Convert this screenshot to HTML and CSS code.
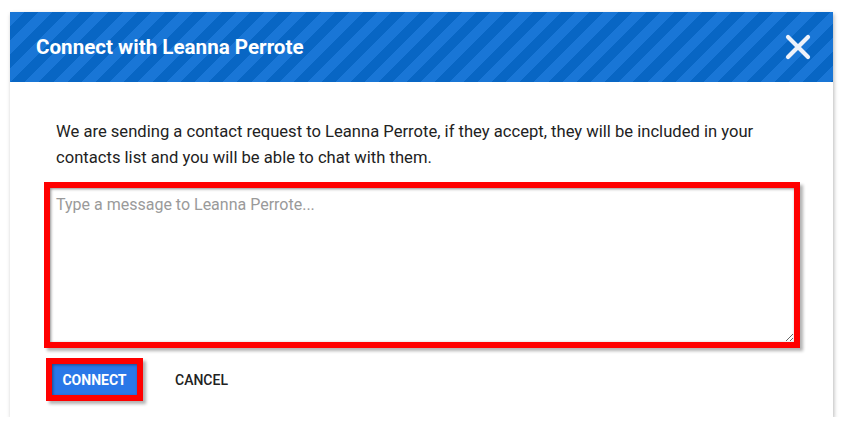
FILE: index.html
```html
<!DOCTYPE html>
<html>
<head>
<meta charset="utf-8">
<link rel="stylesheet" href="styles.css">
</head>
<body>
<div class="dialog">
  <div class="dialog-header">
    <h1 class="dialog-title">Connect with Leanna Perrote</h1>
    <button class="close-btn" aria-label="Close">
      <svg width="26" height="26" viewBox="0 0 26 26"><path d="M3 3 L23 23 M23 3 L3 23" stroke="#eef2fa" stroke-width="4.2" stroke-linecap="round" fill="none"/></svg>
    </button>
  </div>
  <div class="dialog-body">
    <p class="intro">We are sending a contact request to Leanna Perrote, if they accept, they will be included in your contacts list and you will be able to chat with them.</p>
    <textarea class="message" placeholder="Type a message to Leanna Perrote..."></textarea>
    <div class="actions">
      <button class="btn-connect">CONNECT</button>
      <button class="btn-cancel">CANCEL</button>
    </div>
  </div>
</div>
</body>
</html>
```
FILE: styles.css
```css
html, body {
  margin: 0;
  padding: 0;
  background: #fff;
}
body {
  padding: 12px 15px 0 10px;
  font-family: Roboto, "Liberation Sans", sans-serif;
}
.dialog {
  width: 823px;
  height: 405px;
  background: #fff;
  box-shadow: 1px 2px 4px rgba(0,0,0,0.28);
  display: flex;
  flex-direction: column;
}
.dialog-header {
  height: 70px;
  flex: none;
  display: flex;
  align-items: center;
  justify-content: space-between;
  padding: 0 22px 0 26px;
  background: repeating-linear-gradient(135deg, #1976d6 0 10px, #0866c4 10px 20px);
}
.dialog-title {
  margin: 0;
  color: #fff;
  font-size: 20.6px;
  font-weight: 700;
}
.close-btn {
  border: 0;
  padding: 0;
  background: none;
  width: 26px;
  height: 26px;
  display: block;
}
.close-btn svg { display: block; }
.dialog-body {
  padding: 37px 33px 0 34px;
  display: flex;
  flex-direction: column;
}
.intro {
  margin: 0 0 11px;
  padding: 0 12px;
  font-size: 16.6px;
  line-height: 26px;
  color: #222;
}
.message {
  box-sizing: border-box;
  width: 756px;
  height: 166px;
  border: 6px solid #ff0000;
  padding: 7px 6px;
  font-family: Roboto, "Liberation Sans", sans-serif;
  font-size: 16px;
  color: #333;
  box-shadow: inset 1px 1px 3px rgba(0,0,0,0.45), 3px 3px 3px rgba(0,0,0,0.3);
  outline: none;
  resize: both;
}
.message::placeholder { color: #9a9a9a; }
.actions {
  display: flex;
  align-items: center;
  margin-top: 10px;
  padding-left: 2px;
}
.btn-connect {
  box-sizing: border-box;
  width: 97px;
  height: 43px;
  border: 6px solid #ff0000;
  background: #2a78e8;
  color: #fff;
  font-family: Roboto, "Liberation Sans", sans-serif;
  font-weight: 700;
  font-size: 14px;
  padding: 0;
  box-shadow: inset 1px 1px 3px rgba(0,0,0,0.4), 3px 3px 3px rgba(0,0,0,0.3);
}
.btn-cancel {
  margin-left: 32px;
  border: 0;
  background: none;
  padding: 0;
  color: #222;
  font-family: Roboto, "Liberation Sans", sans-serif;
  font-weight: 500;
  font-size: 14px;
}
```
